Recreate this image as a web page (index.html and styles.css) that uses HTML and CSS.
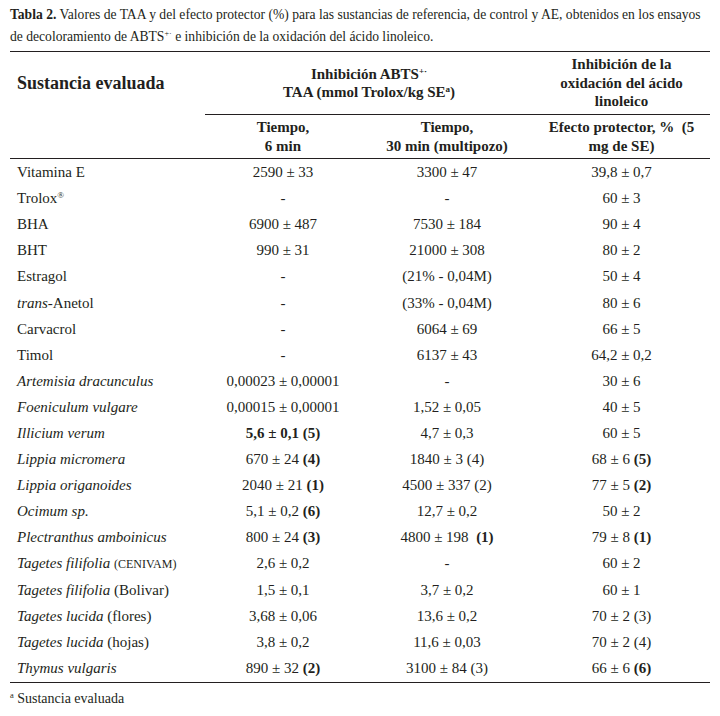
FILE: index.html
```html
<!DOCTYPE html>
<html lang="es">
<head>
<meta charset="utf-8">
<title>Tabla 2</title>
<link rel="stylesheet" href="styles.css">
</head>
<body>
<div class="page">
  <p class="caption"><b>Tabla 2.</b> Valores de TAA y del efecto protector (%) para las sustancias de referencia, de control y AE, obtenidos en los ensayos<br>de decoloramiento de ABTS<sup>+·</sup> e inhibición de la oxidación del ácido linoleico.</p>
  <table class="data">
    <colgroup>
      <col class="c1"><col class="c2"><col class="c3"><col class="c4">
    </colgroup>
    <thead>
      <tr class="h1">
        <th class="name big">Sustancia evaluada</th>
        <th colspan="2" class="ruled">Inhibición ABTS<sup>+·</sup><br>TAA (mmol Trolox/kg SE<sup>a</sup>)</th>
        <th class="ruled">Inhibición de la<br>oxidación del ácido<br>linoleico</th>
      </tr>
      <tr class="h2">
        <th class="ruled"></th>
        <th class="ruled">Tiempo,<br>6 min</th>
        <th class="ruled">Tiempo,<br>30 min (multipozo)</th>
        <th class="ruled">Efecto protector, %&nbsp; (5<br>mg de SE)</th>
      </tr>
    </thead>
    <tbody>
      <tr><td class="name">Vitamina E</td><td>2590 ± 33</td><td>3300 ± 47</td><td>39,8 ± 0,7</td></tr>
      <tr><td class="name">Trolox<sup>®</sup></td><td>-</td><td>-</td><td>60 ± 3</td></tr>
      <tr><td class="name">BHA</td><td>6900 ± 487</td><td>7530 ± 184</td><td>90 ± 4</td></tr>
      <tr><td class="name">BHT</td><td>990 ± 31</td><td>21000 ± 308</td><td>80 ± 2</td></tr>
      <tr><td class="name">Estragol</td><td>-</td><td>(21% - 0,04M)</td><td>50 ± 4</td></tr>
      <tr><td class="name"><i>trans</i>-Anetol</td><td>-</td><td>(33% - 0,04M)</td><td>80 ± 6</td></tr>
      <tr><td class="name">Carvacrol</td><td>-</td><td>6064 ± 69</td><td>66 ± 5</td></tr>
      <tr><td class="name">Timol</td><td>-</td><td>6137 ± 43</td><td>64,2 ± 0,2</td></tr>
      <tr><td class="name"><i>Artemisia dracunculus</i></td><td>0,00023 ± 0,00001</td><td>-</td><td>30 ± 6</td></tr>
      <tr><td class="name"><i>Foeniculum vulgare</i></td><td>0,00015 ± 0,00001</td><td>1,52 ± 0,05</td><td>40 ± 5</td></tr>
      <tr><td class="name"><i>Illicium verum</i></td><td><b>5,6 ± 0,1 (5)</b></td><td>4,7 ± 0,3</td><td>60 ± 5</td></tr>
      <tr><td class="name"><i>Lippia micromera</i></td><td>670 ± 24 <b>(4)</b></td><td>1840 ± 3 (4)</td><td>68 ± 6 <b>(5)</b></td></tr>
      <tr><td class="name"><i>Lippia origanoides</i></td><td>2040 ± 21 <b>(1)</b></td><td>4500 ± 337 (2)</td><td>77 ± 5 <b>(2)</b></td></tr>
      <tr><td class="name"><i>Ocimum sp.</i></td><td>5,1 ± 0,2 <b>(6)</b></td><td>12,7 ± 0,2</td><td>50 ± 2</td></tr>
      <tr><td class="name"><i>Plectranthus amboinicus</i></td><td>800 ± 24 <b>(3)</b></td><td>4800 ± 198&nbsp; <b>(1)</b></td><td>79 ± 8 <b>(1)</b></td></tr>
      <tr><td class="name"><i>Tagetes filifolia</i> <span class="small">(CENIVAM)</span></td><td>2,6 ± 0,2</td><td>-</td><td>60 ± 2</td></tr>
      <tr><td class="name"><i>Tagetes filifolia</i> (Bolivar)</td><td>1,5 ± 0,1</td><td>3,7 ± 0,2</td><td>60 ± 1</td></tr>
      <tr><td class="name"><i>Tagetes lucida</i> (flores)</td><td>3,68 ± 0,06</td><td>13,6 ± 0,2</td><td>70 ± 2 (3)</td></tr>
      <tr><td class="name"><i>Tagetes lucida</i> (hojas)</td><td>3,8 ± 0,2</td><td>11,6 ± 0,03</td><td>70 ± 2 (4)</td></tr>
      <tr class="last"><td class="name"><i>Thymus vulgaris</i></td><td>890 ± 32 <b>(2)</b></td><td>3100 ± 84 (3)</td><td>66 ± 6 <b>(6)</b></td></tr>
    </tbody>
  </table>
  <p class="foot"><sup>a</sup> Sustancia evaluada</p>
</div>
</body>
</html>
```

FILE: styles.css
```css
html, body {
  margin: 0;
  padding: 0;
  background: #ffffff;
}

body {
  font-family: "Liberation Serif", "Times New Roman", serif;
  color: #231f20;
}

.page {
  width: 700px;
  padding-left: 10px;
}

.caption {
  margin: 4px 0 3px 0;
  font-size: 13.6px;
  line-height: 22px;
  white-space: nowrap;
}

sup {
  font-size: 0.6em;
  line-height: 0;
  vertical-align: 0.6em;
}

.data {
  width: 700px;
  table-layout: fixed;
  border-collapse: separate;
  border-spacing: 0;
  border-top: 1px solid #231f20;
  font-size: 15px;
}

.c1 { width: 195px; }
.c2 { width: 156px; }
.c3 { width: 172px; }
.c4 { width: 177px; }

.data th {
  font-weight: bold;
  text-align: center;
  vertical-align: middle;
  padding: 0;
  line-height: 18.5px;
}

.data th.name {
  text-align: left;
  padding-left: 7px;
}

.data th.big {
  font-size: 18px;
}

.h1 { height: 63px; }
.h2 { height: 44px; }

.data th.ruled {
  border-bottom: 1px solid #231f20;
}

.data td {
  padding: 0;
  height: 26.1px;
  line-height: 18px;
  text-align: center;
  vertical-align: middle;
}

.data td.name {
  text-align: left;
  padding-left: 7px;
}

.data tr.last td {
  height: 26px;
  padding-bottom: 1px;
  border-bottom: 1px solid #231f20;
}

.small {
  font-size: 12px;
}

.foot {
  margin: 7px 0 0 0;
  font-size: 14px;
  line-height: 18px;
}
```
